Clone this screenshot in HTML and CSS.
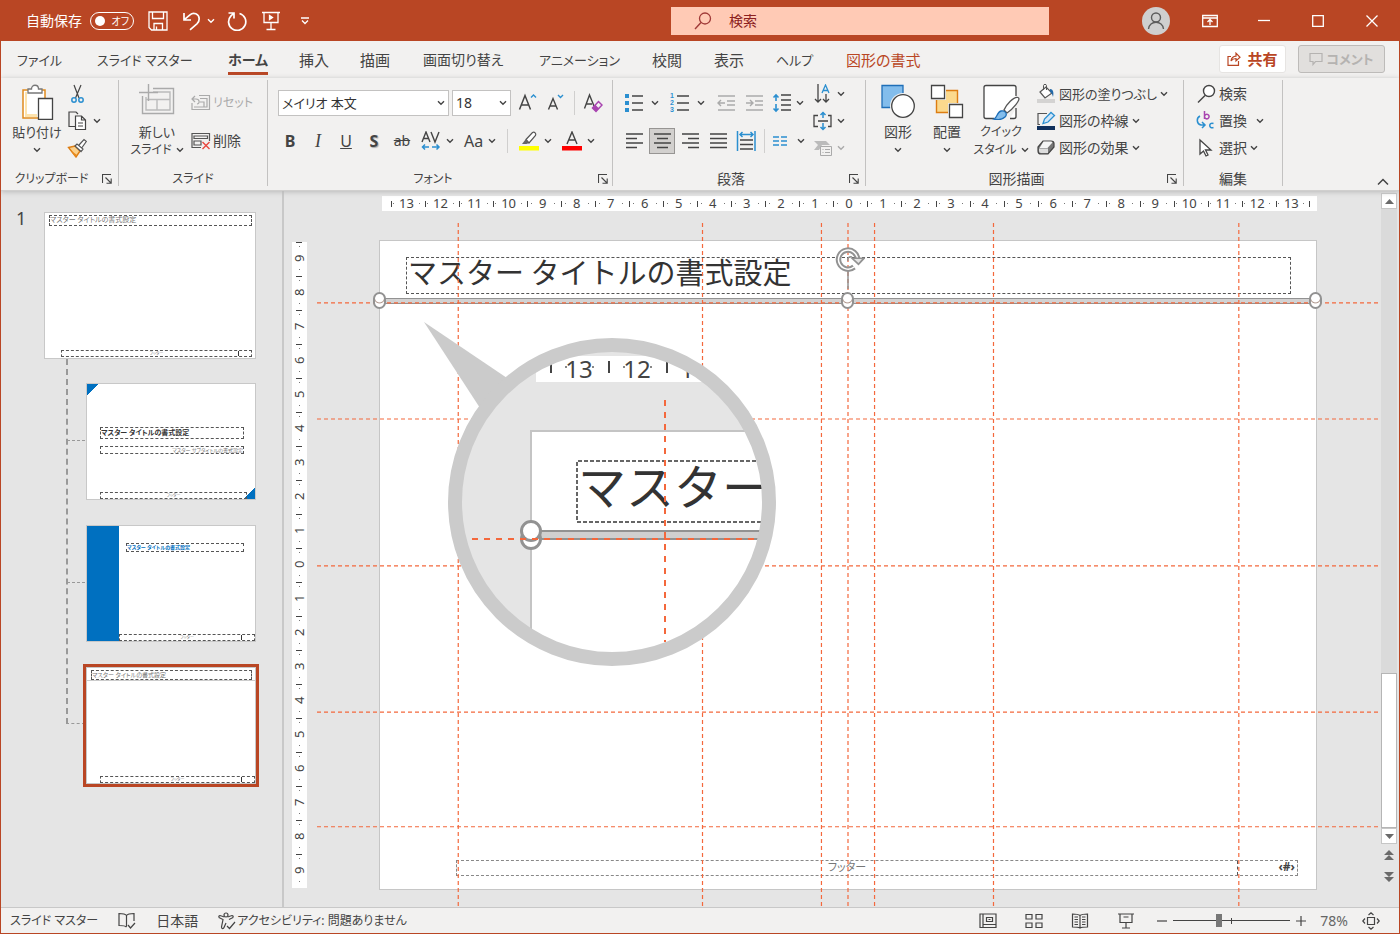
FILE: index.html
```html
<!DOCTYPE html>
<html lang="ja">
<head>
<meta charset="utf-8">
<title>スライド マスター</title>
<link rel="stylesheet" href="styles.css">
</head>
<body>
<svg class="defs" width="0" height="0" aria-hidden="true">
  <symbol id="chev" viewBox="0 0 8 6"><path d="M1 1.2 4 4.2 7 1.2" fill="none" stroke="currentColor" stroke-width="1.4"/></symbol>
  <symbol id="launch" viewBox="0 0 10 10"><path d="M.5 9V.5H9M3.5 3.5 9 9M9.200 4.500V9.200H4.500" fill="none" stroke="currentColor" stroke-width="1.100"/></symbol>
</svg>

<header class="titlebar">
  <div class="quick">
    <label class="autosave" for="autosave">自動保存</label>
    <span class="toggle"><input type="checkbox" id="autosave"><span class="toggle-text">オフ</span></span>
    <button aria-label="保存"><svg width="20" height="20" viewBox="0 0 20 20" class="line"><path d="M1 1h18v18H3.500L1 16.500zM4.500 1v6.500h11V1M6 19v-6.500h8.500V19M8.500 19v-3.500"/></svg></button>
    <button class="undo" aria-label="元に戻す"><svg width="20" height="20" viewBox="0 0 20 20" class="line thick"><path d="M2 2v7h7M2.300 8.700 8 3.800c3.500-3 9-1 9.200 4 .1 2.400-1 3.800-2.300 5L8 18.800"/></svg><svg width="8" height="6"><use href="#chev"/></svg></button>
    <button aria-label="繰り返し"><svg width="20" height="20" viewBox="0 0 20 20" class="line thick"><path d="M1.500 2H7v5.500M12.500 2.500A8.600 8.600 0 1 1 4 4.800L7 2"/></svg></button>
    <button class="present" aria-label="スライド ショー"><svg width="20" height="20" viewBox="0 0 20 20" class="line"><path d="M1 1.500h18M3 1.500v10h14v-10M10 11.500V18M5.500 18.500h9"/><path d="M8.500 4.500v4l3-2z" fill="#fff"/></svg></button>
    <button class="more" aria-label="カスタマイズ"><svg width="10" height="8" viewBox="0 0 10 8" class="line"><path d="M1 1h8M2 3.500l3 3 3-3"/></svg></button>
  </div>
  <label class="search">
    <svg width="20" height="20" viewBox="0 0 20 20"><circle cx="12" cy="7.500" r="5.500" fill="none" stroke="#a03a38" stroke-width="1.300"/><path d="M8 11.500 2 18" stroke="#a03a38" stroke-width="1.400"/></svg>
    <input type="text" placeholder="検索" aria-label="検索">
  </label>
  <div class="window">
    <button class="avatar" aria-label="アカウント"><svg width="28" height="28" viewBox="0 0 28 28"><circle cx="14" cy="14" r="14" fill="#cfcfcf"/><g fill="none" stroke="#5c5c5c" stroke-width="1.400"><circle cx="14" cy="10.500" r="4.500"/><path d="M6.500 22c.5-9 14.500-9 15 0"/></g></svg></button>
    <button aria-label="リボンの表示オプション"><svg width="16" height="14" viewBox="0 0 16 14" class="line"><path d="M.7 1.500h14.600v11H.7zM.7 4h14.600M8 11V6M5.500 8 8 5.500 10.500 8"/></svg></button>
    <button aria-label="最小化"><svg width="12" height="12" viewBox="0 0 12 12" class="line"><path d="M0 5.500h12"/></svg></button>
    <button aria-label="最大化"><svg width="12" height="12" viewBox="0 0 12 12" class="line"><path d="M.7.7h10.600v10.600H.7z"/></svg></button>
    <button aria-label="閉じる"><svg width="12" height="12" viewBox="0 0 12 12" class="line"><path d="m.5.500 11 11m0-11-11 11"/></svg></button>
  </div>
</header>

<nav class="tabs">
  <div class="tablist" role="tablist">
    <button role="tab" class="kana">ファイル</button>
    <button role="tab" class="kana">スライド マスター</button>
    <button role="tab" class="active" aria-selected="true">ホーム</button>
    <button role="tab">挿入</button>
    <button role="tab">描画</button>
    <button role="tab" class="mixed">画面切り替え</button>
    <button role="tab" class="kana">アニメーション</button>
    <button role="tab">校閲</button>
    <button role="tab">表示</button>
    <button role="tab" class="kana">ヘルプ</button>
    <button role="tab" class="context">図形の書式</button>
  </div>
  <div class="tab-actions">
    <button class="share"><svg width="14" height="14" viewBox="0 0 14 14" fill="none" stroke="#b94624" stroke-width="1.200"><path d="M4 4.500H1v8.800h10.500V9"/><path d="M4 9c.5-3.500 2.500-4.800 5-4.900V1.200L13 5.300 9 9V6.500C7 6.500 5.500 7 4 9z"/></svg>共有</button>
    <button class="comment" disabled><svg width="14" height="14" viewBox="0 0 14 14" fill="none" stroke="#b5b3b1" stroke-width="1.200"><path d="M1 1.500h12V9.500H6.500L4 12.500v-3H1z"/></svg>コメント</button>
  </div>
</nav>

<section class="ribbon">
  <div class="group clipboard">
    <div class="body">
      <button class="big"><svg width="34" height="36" viewBox="0 0 34 36"><path d="M3 6h22v28H3z" fill="#fff" stroke="#e08a1e" stroke-width="1.500"/><path d="M5 8h2v24H5zM5 30h12v3H5z" fill="#fde3ad"/><path d="M8 9V5h3.500c0-5 7-5 7 0H22v4z" fill="#fff" stroke="#777" stroke-width="1.300"/><path d="M18.500 14.500h14v21h-14z" fill="#fff" stroke="#444" stroke-width="1.300"/></svg><span class="mixed">貼り付け</span><svg width="8" height="6"><use href="#chev"/></svg></button>
      <div class="stack">
        <button class="row" aria-label="切り取り"><svg width="20" height="20" viewBox="0 0 20 20" fill="none"><path d="m7 1 5 13M14 1 8.500 14" stroke="#444" stroke-width="1.200"/><circle cx="7" cy="16" r="2.200" stroke="#2b8fd0" stroke-width="1.500"/><circle cx="14" cy="16" r="2.200" stroke="#2b8fd0" stroke-width="1.500"/></svg></button>
        <button class="row wide" aria-label="コピー"><svg width="20" height="20" viewBox="0 0 20 20" fill="none" stroke="#444" stroke-width="1.200"><path d="M8.500 15.500H2V1h7l2 2"/><path d="M8.500 5h6l4 4v9.500h-10zM14.500 5v4h4M11 12h5M11 15h5" fill="#fff"/></svg><svg width="8" height="6"><use href="#chev"/></svg></button>
        <button class="row" aria-label="書式のコピー"><svg width="20" height="20" viewBox="0 0 20 20"><path d="M1.500 9.500 8 8l5 5-4 6z" fill="#fbd08a" stroke="#dd7d12" stroke-width="1.400"/><path d="m3 12 7 5-1.500 2z" fill="#e88a1c"/><path d="m8 8 2-2 6 5-2 2.500zM12 7l5-5.500 2.300 2L15 9.500" fill="#fff" stroke="#555" stroke-width="1.200"/></svg></button>
      </div>
    </div>
    <div class="caption kana"><span>クリップボード</span><button aria-label="クリップボードの詳細"><svg width="10" height="10"><use href="#launch"/></svg></button></div>
  </div>

  <div class="group slides">
    <div class="body">
      <button class="big"><svg width="36" height="36" viewBox="0 0 36 36" fill="none" stroke="#aaa" stroke-width="1.400"><path d="M14 4.500h20.500v25h-31V12"/><path d="M7 13v13h24V8H14M7 15.500h24M18 15.500V26M14 8h17" stroke="#bbb"/><path d="M9.500 0v17M0 8.500h19" /></svg><span class="mixed">新しい</span><span class="with-chev kana">スライド<svg width="8" height="6"><use href="#chev"/></svg></span></button>
      <div class="rows">
        <button class="row" disabled><svg width="20" height="18" viewBox="0 0 20 18" fill="none" stroke="#aaa" stroke-width="1.200"><path d="M8 1.500h10.500v14H1V9M3 13h13V4.500H9M9 8h4v5"/><path d="M1 5h4c4 0 4 5 1 5M4 2 1 5l3 3"/></svg><span class="kana">リセット</span></button>
        <button class="row"><svg width="20" height="18" viewBox="0 0 20 18" fill="none" stroke="#555" stroke-width="1.200"><path d="M10 15.500H1v-14h17.500V9M3 4h13.500v2.500H3zM3 9v4h7V9z"/><path d="m11.500 10 7 7m0-7-7 7" stroke="#e8473f" stroke-width="1.400"/></svg><span>削除</span></button>
      </div>
    </div>
    <div class="caption kana"><span>スライド</span></div>
  </div>

  <div class="group font">
    <div class="body">
      <div class="rows">
        <div class="tools inset">
          <span class="combo face"><select aria-label="フォント"><option>メイリオ 本文</option></select><svg width="8" height="6"><use href="#chev"/></svg></span>
          <span class="combo size"><select aria-label="フォント サイズ"><option>18</option></select><svg width="8" height="6"><use href="#chev"/></svg></span>
          <button class="tool" aria-label="フォント サイズの拡大"><svg width="20" height="20" viewBox="0 0 20 20" fill="none"><path d="M1.500 16.500 7 2.500l5.500 14M3.500 12h7" stroke="#444" stroke-width="1.500"/><path d="m13 4.500 2.500-2.500L18 4.500" stroke="#2b8fd0" stroke-width="1.400"/></svg></button>
          <button class="tool" aria-label="フォント サイズの縮小"><svg width="20" height="20" viewBox="0 0 20 20" fill="none"><path d="M2.500 16.500 7 5.500l4.500 11M4 13h6" stroke="#444" stroke-width="1.400"/><path d="m12 2 2.500 2.500L17 2" stroke="#2b8fd0" stroke-width="1.400"/></svg></button>
          <span class="sep near"></span>
          <button class="tool" aria-label="書式のクリア"><svg width="20" height="20" viewBox="0 0 20 20" fill="none"><path d="M1.500 15.500 6.500 2l4.500 11M3.300 11H9" stroke="#444" stroke-width="1.400"/><path d="m9.500 15 6-6.500 3.500 3.500-6 6.500zM12 12.500l3.500 3.500" stroke="#a844b0" stroke-width="1.500" fill="#f2f1f0"/><path d="m9.500 15 2.500-2.500 3.500 3.500-2.500 2.500z" fill="#a844b0"/></svg></button>
        </div>
        <div class="tools">
          <button class="tool glyph"><b>B</b></button>
          <button class="tool glyph"><i>I</i></button>
          <button class="tool glyph"><u>U</u></button>
          <button class="tool glyph shadow"><b>S</b></button>
          <button class="tool glyph small"><s>ab</s></button>
          <button class="split" aria-label="文字の間隔"><svg width="20" height="20" viewBox="0 0 20 20" fill="none"><path d="m1 11 4-10 4 10M2.500 7.500h5M10 1l4 10 4-10" stroke="#444" stroke-width="1.400"/><path d="M1 16h7M11 16h7M4 13.500 1.500 16 4 18.500M15.500 13.500 18 16l-2.500 2.500" stroke="#2b8fd0" stroke-width="1.500"/></svg><svg width="8" height="6"><use href="#chev"/></svg></button>
          <button class="split glyph"><span>Aa</span><svg width="8" height="6"><use href="#chev"/></svg></button>
          <span class="sep"></span>
          <button class="split" aria-label="蛍光ペン"><svg width="20" height="20" viewBox="0 0 20 20"><path d="M7 8.500 13.500 1.500c2-1 4 1 3 3L10 12z" fill="#fff" stroke="#555" stroke-width="1.200"/><path d="M6.500 8.500 10 12l-2.500 1H3z" fill="#666"/><path d="M0 15h20v4.500H0z" fill="#ff0"/></svg><svg width="8" height="6"><use href="#chev"/></svg></button>
          <button class="split" aria-label="フォントの色"><svg width="20" height="20" viewBox="0 0 20 20"><path d="M5 13 10 1l5 12M6.800 9h6.400" fill="none" stroke="#444" stroke-width="1.400"/><path d="M0 15h20v4.500H0z" fill="#f00"/></svg><svg width="8" height="6"><use href="#chev"/></svg></button>
        </div>
      </div>
    </div>
    <div class="caption kana"><span>フォント</span><button aria-label="フォントの詳細"><svg width="10" height="10"><use href="#launch"/></svg></button></div>
  </div>

  <div class="group para">
    <div class="body">
      <div class="rows">
        <div class="tools">
          <button class="split" aria-label="箇条書き"><svg width="20" height="20" viewBox="0 0 20 20"><path d="M1 1h4v4H1zM1 8h4v4H1zM1 15h4v4H1z" fill="#2b8fd0"/><path d="M8 3h11M8 10h11M8 17h11" stroke="#444" stroke-width="1.400"/></svg><svg width="8" height="6"><use href="#chev"/></svg></button>
          <button class="split" aria-label="段落番号"><svg width="20" height="22" viewBox="0 -1 20 22"><g class="digits"><text x="0" y="5">1</text><text x="0" y="12">2</text><text x="0" y="19">3</text></g><path d="M7 3h12M7 10h12M7 17h12" stroke="#444" stroke-width="1.400"/></svg><svg width="8" height="6"><use href="#chev"/></svg></button>
          <button class="tool" aria-label="インデントを減らす" disabled><svg width="20" height="20" viewBox="0 0 20 20" fill="none" stroke="#aaa" stroke-width="1.400"><path d="M2 3h17M11 8h8M11 12h8M2 17h17M2 10h7M5 7 2 10l3 3"/></svg></button>
          <button class="tool" aria-label="インデントを増やす" disabled><svg width="20" height="20" viewBox="0 0 20 20" fill="none" stroke="#aaa" stroke-width="1.400"><path d="M2 3h17M11 8h8M11 12h8M2 17h17M2 10h7M6 7l3 3-3 3"/></svg></button>
          <button class="split" aria-label="行間"><svg width="20" height="20" viewBox="0 0 20 20" fill="none"><path d="M9 2h10M9 7h10M9 12h10M9 17h10" stroke="#444" stroke-width="1.400"/><path d="M4 2v6M4 11v7M1.500 4.500 4 2l2.500 2.500M1.500 15.500 4 18l2.500-2.500" stroke="#2b8fd0" stroke-width="1.600"/></svg><svg width="8" height="6"><use href="#chev"/></svg></button>
        </div>
        <div class="tools">
          <button class="tool" aria-label="左揃え"><svg width="20" height="20" class="bars" viewBox="0 0 20 20"><path d="M2 3h17M2 7.500h11M2 12h17M2 16.500h11"/></svg></button>
          <button class="tool on" aria-label="中央揃え" aria-pressed="true"><svg width="20" height="20" class="bars" viewBox="0 0 20 20"><path d="M2 3h17M5 7.500h11M2 12h17M5 16.500h11"/></svg></button>
          <button class="tool" aria-label="右揃え"><svg width="20" height="20" class="bars" viewBox="0 0 20 20"><path d="M2 3h17M8 7.500h11M2 12h17M8 16.500h11"/></svg></button>
          <button class="tool" aria-label="両端揃え"><svg width="20" height="20" class="bars" viewBox="0 0 20 20"><path d="M2 3h17M2 7.500h17M2 12h17M2 16.500h17"/></svg></button>
          <button class="tool" aria-label="均等割り付け"><svg width="20" height="20" class="bars" viewBox="0 0 20 20"><path d="M4 9h13M4 13.500h13M4 18h13"/><path d="M1.500 0v20M19 0v20M4 3.500h13M6.500 1 4 3.500 6.500 6M14.500 1 17 3.500 14.500 6" class="blue"/></svg></button>
          <span class="sep"></span>
          <button class="split" aria-label="段の追加または削除"><svg width="20" height="20" viewBox="0 0 20 20"><path d="M0 6h6M0 10h6M0 14h6M8 6h6M8 10h6M8 14h6" stroke="#2b8fd0" stroke-width="1.400"/></svg><svg width="8" height="6"><use href="#chev"/></svg></button>
        </div>
      </div>
      <div class="stack">
        <button class="row" aria-label="文字列の方向"><svg width="20" height="20" viewBox="0 0 20 20" fill="none"><path d="M5 0v18M2 15l3 3 3-3M13 10v8M10 15l3 3 3-3" stroke="#444" stroke-width="1.300"/><path d="m9 9 3.500-8L16 9M10.300 6.500h4.400" stroke="#2b8fd0" stroke-width="1.300"/></svg><svg width="8" height="6"><use href="#chev"/></svg></button>
        <button class="row" aria-label="文字の配置"><svg width="20" height="20" viewBox="0 0 20 20" fill="none"><path d="M5 4.500H1v11h4M15 4.500h3v11h-3M5 10h10" stroke="#444" stroke-width="1.300"/><path d="M10 1v6M10 12v7M7.500 4 10 1.500 12.500 4M7.500 16l2.500 2.500 2.500-2.500" stroke="#2b8fd0" stroke-width="1.500"/></svg><svg width="8" height="6"><use href="#chev"/></svg></button>
        <button class="row" aria-label="SmartArt に変換" disabled><svg width="20" height="20" viewBox="0 0 20 20"><path d="M1 3h12l4 4H9l-3 5H1l4-5z" fill="#bbb"/><path d="M7.500 8.500h11v9h-11z" fill="#f2f1f0" stroke="#aaa"/><path d="M9.500 11.500h1M12 11.500h5M9.500 14.500h1M12 14.500h5" stroke="#aaa"/></svg><svg width="8" height="6"><use href="#chev"/></svg></button>
      </div>
    </div>
    <div class="caption"><span>段落</span><button aria-label="段落の詳細"><svg width="10" height="10"><use href="#launch"/></svg></button></div>
  </div>

  <div class="group drawing">
    <div class="body">
      <button class="big"><svg width="34" height="36" viewBox="0 0 34 36"><path d="M1 1.500h21v22H1z" fill="#83bdec" stroke="#1f6fb8" stroke-width="1.300"/><circle cx="22" cy="22" r="13" fill="#f2f1f0"/><circle cx="22" cy="22" r="11.300" fill="#fff" stroke="#444" stroke-width="1.300"/></svg><span>図形</span><svg width="8" height="6"><use href="#chev"/></svg></button>
      <button class="big"><svg width="34" height="36" viewBox="0 0 34 36"><path d="M6.500 6.500h21v22h-21z" fill="#fbd98d" stroke="#dd7d12" stroke-width="1.400"/><path d="M0 0h16v16H0zM18 19h16v16H18z" fill="#f2f1f0"/><path d="M1.500 1.500h13v13h-13zM19.500 20.500h13v13h-13z" fill="#fff" stroke="#444" stroke-width="1.300"/></svg><span>配置</span><svg width="8" height="6"><use href="#chev"/></svg></button>
      <button class="big quickstyle"><svg width="38" height="36" viewBox="0 0 38 36"><path d="M34 12V3.500q0-2-2-2H4q-2 0-2 2v29q0 2 2 2h8M28 34.500h4q2 0 2-2V24" fill="#fff" stroke="#444" stroke-width="1.300"/><path d="M22 26C24 21 32 12 36 13.500S30 26 25 29z" fill="#fff" stroke="#555" stroke-width="1.300"/><path d="M12 35c3-1 3-7 7-8s7 3 4 6-7 3-11 2z" fill="#83bdec" stroke="#1f6fb8" stroke-width="1.300"/></svg><span class="kana">クイック</span><span class="with-chev kana">スタイル<svg width="8" height="6"><use href="#chev"/></svg></span></button>
      <div class="stack">
        <button class="row"><svg width="20" height="20" viewBox="0 0 20 20"><path d="m4 8 6-5 6 6-7 5z" fill="#fff" stroke="#555" stroke-width="1.200"/><path d="M7.500 6V1.500c0-1.500 3-1.500 3 0V6" fill="none" stroke="#555"/><path d="M14 5c3 0 4 3 3 8-1-3-1-4-3-5z" fill="#2268a8"/><path d="M1 15h18v4H1z" fill="#d4d3d2"/></svg><span class="mixed">図形の塗りつぶし</span><svg width="8" height="6"><use href="#chev"/></svg></button>
        <button class="row"><svg width="20" height="20" viewBox="0 0 20 20"><path d="M11 2.500H2v11h2" fill="none" stroke="#555" stroke-width="1.200"/><path d="M7 12.500 8.500 8l6.500-6.500 3.500 3L12 11z" fill="#cfe5f8" stroke="#2b8fd0" stroke-width="1.300"/><path d="M1 15h18v4H1z" fill="#10305c"/></svg><span>図形の枠線</span><svg width="8" height="6"><use href="#chev"/></svg></button>
        <button class="row"><svg width="20" height="20" viewBox="0 0 20 20"><path d="M7 3h8q3 0 3 2.500V9l-6 7H5q-3 0-3-3V9z" fill="#777" stroke="#444" stroke-width="1.200"/><path d="M7.500 3.500H15q2 0 1 1.500l-4.500 5H3.500z" fill="#f5f5f5"/><path d="M3 10.500h9V15H5q-2 0-2-2z" fill="#ddd"/></svg><span>図形の効果</span><svg width="8" height="6"><use href="#chev"/></svg></button>
      </div>
    </div>
    <div class="caption"><span>図形描画</span><button aria-label="図形描画の詳細"><svg width="10" height="10"><use href="#launch"/></svg></button></div>
  </div>

  <div class="group edit">
    <div class="body">
      <div class="stack">
        <button class="row"><svg width="20" height="20" viewBox="0 0 20 20" fill="none" stroke="#444" stroke-width="1.400"><circle cx="13" cy="7" r="5.500" fill="#fff"/><path d="M9 11.500 2 18.500"/></svg><span>検索</span></button>
        <button class="row replace"><svg width="20" height="20" viewBox="0 0 20 20" fill="none" stroke-width="1.500"><path d="M8.500 0v8M8.500 5.500a2.300 2.300 0 1 1 0 .1" stroke="#a844b0"/><path d="M4 5c-4 2-3.500 8 1 9h3M6 11l3 3-3 3M17.500 12.500c-5-2-5 6 0 4" stroke="#2b8fd0"/></svg><span>置換</span><svg width="8" height="6"><use href="#chev"/></svg></button>
        <button class="row"><svg width="20" height="20" viewBox="0 0 20 20"><path d="M4 2v14l3.500-3 2.500 5 2-1-2.500-5H15z" fill="#fff" stroke="#444" stroke-width="1.300"/></svg><span>選択</span><svg width="8" height="6"><use href="#chev"/></svg></button>
      </div>
    </div>
    <div class="caption"><span>編集</span></div>
  </div>
  <button class="collapse" aria-label="リボンを折りたたむ"><svg width="12" height="8" viewBox="0 0 12 8" fill="none" stroke="#444" stroke-width="1.500"><path d="m1 6.500 5-5 5 5"/></svg></button>
</section>

<main class="workspace">
  <aside class="panel">
    <span class="number">1</span>
    <div class="thumbs">
      <div class="thumb master"><p class="ph t-title">マスター タイトルの書式設定</p><p class="ph t-foot">フッター<span></span></p></div>
      <div class="layouts">
        <div class="thumb cover"><p class="ph c-title">マスター タイトルの書式設定</p><p class="ph c-sub">マスター サブタイトルの書式設定</p><p class="ph t-foot">フッター</p></div>
        <div class="thumb section"><p class="ph s-title">マスター タイトルの書式設定</p><p class="ph t-foot">フッター<span></span></p></div>
        <div class="thumb selected"><p class="ph t-title">マスター タイトルの書式設定</p><p class="ph t-foot">フッター<span></span></p></div>
      </div>
    </div>
  </aside>

  <section class="stage">
    <div class="ruler across">
      <span>13</span><span>12</span><span>11</span><span>10</span><span>9</span><span>8</span><span>7</span><span>6</span><span>5</span><span>4</span><span>3</span><span>2</span><span>1</span><span>0</span><span>1</span><span>2</span><span>3</span><span>4</span><span>5</span><span>6</span><span>7</span><span>8</span><span>9</span><span>10</span><span>11</span><span>12</span><span>13</span>
    </div>
    <div class="ruler down">
      <span>9</span><span>8</span><span>7</span><span>6</span><span>5</span><span>4</span><span>3</span><span>2</span><span>1</span><span>0</span><span>1</span><span>2</span><span>3</span><span>4</span><span>5</span><span>6</span><span>7</span><span>8</span><span>9</span>
    </div>
    <div class="slide">
      <h1 class="title">マスター タイトルの書式設定</h1>
      <div class="rule"></div>
      <div class="footer"><span class="footer-text">フッター</span><span class="footer-num">‹#›</span></div>

      <div class="guides">
        <svg width="100%" height="100%">
          <g>
            <line x1="13.300%" x2="13.300%" y2="100%"/><line x1="36.300%" x2="36.300%" y2="100%"/><line x1="47.500%" x2="47.500%" y2="100%"/><line x1="50%" x2="50%" y2="100%"/><line x1="52.500%" x2="52.500%" y2="100%"/><line x1="63.700%" x2="63.700%" y2="100%"/><line x1="86.800%" x2="86.800%" y2="100%"/>
            <line y1="11.700%" y2="11.700%" x2="100%"/><line y1="28.700%" y2="28.700%" x2="100%"/><line y1="50.200%" y2="50.200%" x2="100%"/><line y1="71.600%" y2="71.600%" x2="100%"/><line y1="88.400%" y2="88.400%" x2="100%"/>
          </g>
        </svg>
      </div>

      <i class="handle left"></i><i class="handle mid"></i><i class="handle right"></i>
      <svg class="rotate" width="32" height="52" viewBox="0 0 32 52" fill="none"><path d="M15 24v18" stroke="#929292" stroke-width="1.500"/><path d="M24.500 13A9.500 9.500 0 1 0 21 20" stroke="#929292" stroke-width="5.500"/><path d="M24.500 13A9.500 9.500 0 1 0 21 20" stroke="#fff" stroke-width="1.500"/><path d="M15 14a3 3 0 0 1 4-4" stroke="#929292" stroke-width="1.500"/><path d="M17 10.500h16l-7.500 8z" fill="#929292"/><path d="M21 12h8l-3.500 4z" fill="#e4e4e4"/></svg>

      <svg class="lens" width="356" height="348" viewBox="422 320 356 348">
        <clipPath id="lens-clip"><circle cx="612" cy="502" r="151"/></clipPath>
        <path d="M424 322 510 380 480 408z" fill="#cbcbcb"/>
        <circle cx="612" cy="502" r="157" fill="#e5e5e5"/>
        <g clip-path="url(#lens-clip)">
          <path d="M536 356h240v26H536z" fill="#fff"/>
          <path d="M551 361v12M609 361v12M667 361v12" stroke="#444" stroke-width="2"/>
          <path d="M565 367h2M592 367h2M623 367h2M650 367h2M681 367h2" stroke="#888" stroke-width="2"/>
          <g class="lens-num"><text x="579" y="378">13</text><text x="637" y="378">12</text><text x="694" y="378">11</text></g>
          <path d="M531 431h250v250H531z" fill="#fff" stroke="#c4c4c4" stroke-width="2"/>
          <path d="M780 461H577v61h203" fill="none" stroke="#666" stroke-width="2" stroke-dasharray="4 2"/>
          <text class="lens-title" x="578" y="505">マスター</text>
          <path d="M531 531h250v8H531z" fill="#d0d0d0" stroke="#929292" stroke-width="2"/>
          <circle cx="531" cy="539" r="9.500" fill="#fff" stroke="#929292" stroke-width="3"/>
          <circle cx="531" cy="531" r="9.500" fill="#fff" stroke="#929292" stroke-width="3"/>
          <path d="M665 400v242M472 539h300" stroke="#f4683c" stroke-width="2" stroke-dasharray="6 6"/>
        </g>
        <circle cx="612" cy="502" r="157" fill="none" stroke="#cbcbcb" stroke-width="14"/>
      </svg>
    </div>
  </section>

  <div class="scroll">
    <button aria-label="上へ"><svg width="9" height="5"><path d="M0 5 4.500 0 9 5z"/></svg></button>
    <div class="track"><div class="grip"></div></div>
    <button aria-label="下へ"><svg width="9" height="5"><path d="M0 0 4.500 5 9 0z"/></svg></button>
    <button class="page" aria-label="前のスライド"><svg width="10" height="10"><path d="M0 5 5 0l5 5zM0 10l5-5 5 5z"/></svg></button>
    <button class="page" aria-label="次のスライド"><svg width="10" height="10"><path d="M0 0 5 5l5-5zM0 5l5 5 5-5z"/></svg></button>
  </div>
</main>

<footer class="status">
  <div class="status-left">
    <span class="kana mode">スライド マスター</span>
    <button aria-label="スペル チェック"><svg width="18" height="18" viewBox="0 0 18 18" class="ink"><path d="M8.500 14.500V3.500C7 1.500 4 1.500 1 1.500v12c3 0 6 0 7.500 1.500M8.500 3.500C10 1.500 13 1.500 16 1.500V9M10 13l2.500 3L17 11"/></svg></button>
    <button>日本語</button>
    <button class="access kana"><svg width="18" height="18" viewBox="0 0 18 18" class="ink"><circle cx="8" cy="3" r="2"/><path d="M6.500 5 2 3.500C0 4 1 6 2 6l3 1.500L3.500 15c0 2 2 2 2.500.5L8 11M9.500 5 14 3.500c2 .5 1 2.500 0 2.500l-3 1.500M9 14l2.500 2.500L17 10"/></svg><span>アクセシビリティ: 問題ありません</span></button>
  </div>
  <div class="status-right">
    <button aria-label="標準"><svg width="18" height="16" viewBox="0 0 18 16" class="ink"><path d="M1 1h16v13.500H1zM4 1v13.500M4 11.500h13M7.500 4.500h6v4h-6zM9.500 6.500h2"/></svg></button>
    <button aria-label="スライド一覧"><svg width="18" height="16" viewBox="0 0 18 16" class="ink"><path d="M1 1.500h6v4.500H1zM11 1.500h6v4.500h-6zM1 10h6v4.500H1zM11 10h6v4.500h-6z"/></svg></button>
    <button aria-label="閲覧表示"><svg width="18" height="16" viewBox="0 0 18 16" class="ink"><path d="M9 15V2.500C7 1 4 1 1.500 1v13c2.500 0 5.500 0 7.500 1 2-1 5-1 7.500-1V1C14 1 11 1 9 2.500M3.500 4H7M3.500 6.500H7M3.500 9H7M3.500 11.500H7M11 4h3.500M11 6.500h3.500M11 9h3.500M11 11.500h3.500"/></svg></button>
    <button aria-label="スライド ショー"><svg width="18" height="16" viewBox="0 0 18 16" class="ink"><path d="M1 1h16M3 1v8.500h12V1M6.500 4h5M9 9.500V15M5 15h8"/></svg></button>
    <div class="zoom">
      <button aria-label="縮小"><svg width="10" height="10" class="ink"><path d="M0 5h10"/></svg></button>
      <input type="range" min="0" max="100" value="38" aria-label="ズーム">
      <button aria-label="拡大"><svg width="10" height="10" class="ink"><path d="M0 5h10M5 0v10"/></svg></button>
    </div>
    <button class="percent">78%</button>
    <button aria-label="ウィンドウに合わせる"><svg width="18" height="18" viewBox="0 0 18 18" class="ink"><path d="M5.500 5.500h7v7h-7zM6.500 3 9 .8 11.500 3M6.500 15 9 17.200l2.500-2.200M3 6.500.8 9 3 11.500M15 6.500 17.200 9 15 11.500"/></svg></button>
  </div>
</footer>
</body>
</html>
```
FILE: styles.css
```css
* { box-sizing: border-box; }

body {
  margin: 0;
  min-height: 100vh;
  display: flex;
  flex-direction: column;
  border: 1px solid #b94624;
  border-top: 0;
  background: #e5e5e5;
  color: #444;
  font: 14px/18px "Noto Sans", "Noto Sans CJK JP", sans-serif;
  font-feature-settings: "palt";
}

button, input, select { font: inherit; font-feature-settings: inherit; color: inherit; }
button { margin: 0; padding: 0; border: 0; background: none; white-space: nowrap; }
button:disabled { color: #aaa; }
svg { display: block; flex: none; }
p, h1 { margin: 0; }
.defs { position: absolute; }
.line { fill: none; stroke: #fff; stroke-width: 1.3; }
.thick { stroke-width: 1.7; }
.ink { fill: none; stroke: #444; stroke-width: 1.2; }
.kana { font-size: 12px; }
.mixed { font-size: 13px; }

/* Title bar */
.titlebar {
  height: 41px;
  flex: none;
  display: grid;
  grid-template-columns: 67fr 378px 35fr;
  align-items: center;
  background: #b94624;
  color: #fff;
}
.quick { display: flex; align-items: center; padding-left: 25px; }
.toggle {
  display: flex; align-items: center; justify-content: space-between;
  width: 44px; height: 18px; margin: 0 14px 0 8px; padding: 0 4px;
  border: 1px solid #fff; border-radius: 9px;
}
.toggle input { appearance: none; width: 10px; height: 10px; margin: 0; border-radius: 50%; background: #fff; }
.toggle-text { font-size: 10px; }
.undo { display: flex; align-items: center; gap: 5px; margin: 0 12px 0 14px; }
.present { margin-left: 14px; }
.more { margin-left: 19px; }
.search { display: flex; align-items: center; height: 28px; padding-left: 22px; gap: 16px; background: #ffcab5; }
.search input { flex: 1; min-width: 0; padding: 0; border: 0; background: none; outline: 0; }
.search input::placeholder { color: #8b2020; opacity: 1; }
.window { display: flex; align-items: center; justify-content: flex-end; }
.window button { width: 54px; display: grid; place-items: center; }

/* Tabs */
.tabs { height: 37px; flex: none; display: flex; justify-content: space-between; background: #f2f1f0; }
.tablist {
  display: grid;
  grid-template-columns: 80px 131px 71px 61px 63px 116px 113px 62px 62px 70px auto;
  padding-left: 16px;
  align-items: center;
  justify-items: start;
}
.tablist button { height: 30px; font-size: 15px; }
.tablist .kana { font-size: 13px; }
.tablist .mixed { font-size: 14px; }
.tablist .active { font-size: 14px; font-weight: 700; border-bottom: 3px solid #b94624; border-top: 3px solid transparent; }
.tablist .context { color: #b94624; }
.tab-actions { display: flex; gap: 12px; padding: 4px 14px 0 0; }
.tab-actions button { display: flex; align-items: center; justify-content: center; gap: 6px; height: 28px; border-radius: 3px; }
.tab-actions .share { width: 67px; background: #fff; color: #b94624; font-weight: 700; font-size: 15px; border: 1px solid #e6e4e2; }
.tab-actions .comment { width: 87px; gap: 3px; background: #e1dfdd; border: 1px solid #bdbbb9; color: #b5b3b1; font-weight: 700; font-size: 13px; }

/* Ribbon */
.ribbon {
  position: relative;
  z-index: 1;
  height: 113px;
  flex: none;
  display: flex;
  padding: 2px 0 4px;
  background: #f2f1f0;
  border-bottom: 1px solid #d0cfce;
  box-shadow: 0 1px 5px #b8b8b8;
}
.group { display: flex; flex-direction: column; border-right: 1px solid #c3c2c1; }
.clipboard { width: 118px; }
.slides { width: 149px; }
.font { width: 345px; }
.para { width: 253px; }
.drawing { width: 318px; }
.edit { width: 99px; }
.body { flex: 1; display: flex; align-items: flex-start; }
.clipboard .body { padding-left: 12px; gap: 6px; }
.slides .body { padding-left: 8px; gap: 4px; }
.font .body { padding-left: 8px; }
.para .body { padding-left: 7px; gap: 4px; }
.drawing .body { padding-left: 8px; gap: 1px; }
.edit .body { padding-left: 12px; }

.caption { display: grid; grid-template-columns: 1fr 14px; height: 14px; align-items: center; }
.caption span { text-align: center; line-height: 14px; }
.slides .caption, .edit .caption { grid-template-columns: 1fr; }
.drawing .caption, .para .caption { padding-right: 2px; }
.clipboard .caption { padding-right: 2px; }

.big { width: 48px; padding-top: 4px; display: flex; flex-direction: column; align-items: center; }
.big > span { line-height: 18px; }
.big > svg:first-child { margin-bottom: 3px; }
.big > svg:last-child { margin-top: 6px; }
.slides .big { width: 60px; }
.big.quickstyle { width: 58px; margin-right: 5px; }
.with-chev { display: flex; align-items: center; gap: 4px; }

.row { display: flex; align-items: center; gap: 4px; height: 27px; }
.row.wide { gap: 6px; }
.row.replace svg:last-child { margin-left: 6px; }
.edit .row, .drawing .row { gap: 3px; }
.rows { padding-top: 4px; }
.rows > * { height: 38px; }
.rows .row { gap: 2px; }

.tools { display: flex; align-items: center; }
.inset { padding-left: 2px; }
.tool { width: 28px; height: 26px; display: grid; place-items: center; }
.tool.on { width: 26px; margin: 0 1px; background: #d2d0ce; border: 1px solid #979593; }
.split { height: 26px; padding: 0 5px; display: flex; align-items: center; gap: 5px; }
.para .split { padding: 0 4px; gap: 7px; margin-right: 3px; }
.para .split:last-child { gap: 4px; margin-right: 0; }
.para .sep { margin: 0 4px; }
.sep { width: 1px; height: 24px; margin: 0 6px; background: #d0cfce; }
.sep.near { margin: 0 4px; }
.glyph { font-size: 16px; }
.glyph.small { font-size: 14px; }
.glyph i { font-family: "Liberation Serif", serif; font-size: 18px; }
.shadow b { text-shadow: 1px 1px 1px #aaa; }
.digits { font: 700 7px "Liberation Sans", sans-serif; fill: #2b8fd0; }
.bars { fill: none; stroke: #444; stroke-width: 1.4; }
.bars .blue { stroke: #2b8fd0; stroke-width: 1.5; }

.combo { display: grid; align-items: center; height: 26px; background: #fff; border: 1px solid #c3c2c1; }
.combo > * { grid-area: 1 / 1; }
.combo svg { justify-self: end; margin-right: 3px; pointer-events: none; }
.combo select { appearance: none; width: 100%; height: 24px; padding: 0 3px; border: 0; background: none; outline: 0; color: #333; }
.face { width: 171px; margin-right: 3px; font-size: 13px; }
.size { width: 59px; margin-right: 3px; }
.collapse { margin: auto 10px 0 auto; }

/* Workspace */
.workspace { flex: 1; min-height: 0; display: flex; }
.panel { flex: none; width: 283px; display: flex; padding: 21px 0 0 15px; border-right: 2px solid #c8c8c8; }
.number { width: 28px; font-size: 18px; line-height: 12px; }
.thumb { position: relative; background: #fff; border: 1px solid #c8c8c8; }
.master { width: 212px; height: 147px; }
.layouts {
  position: relative;
  display: flex; flex-direction: column; gap: 25px;
  margin-left: 22px; padding: 24px 0 0 20px;
}
.layouts::before {
  content: ""; position: absolute; left: 0; top: 0; bottom: 60px;
  border-left: 2px dashed #999; border-bottom: 1px dashed #999; width: 17px;
}
.layouts .thumb { width: 170px; height: 117px; }
.layouts .thumb::before { content: ""; position: absolute; left: -20px; top: 56px; width: 18px; border-top: 1px dashed #999; }
.layouts .selected { outline: 3px solid #b94624; }
.layouts .selected::before { left: 0; top: 12px; width: 100%; border-top: 1px solid #ccc; }
.ph { position: absolute; border: 1px dashed #555; font-size: 6px; line-height: 8px; white-space: nowrap; color: #777; }
.t-title { left: 4px; right: 3px; top: 2px; height: 11px; font-size: 7px; }
.t-foot { left: 16px; right: 3px; bottom: 1px; height: 7px; text-align: center; font-size: 4px; line-height: 5px; }
.t-foot span { position: absolute; right: 12px; top: 0; height: 5px; border-left: 1px dashed #333; }
.layouts .t-foot { left: 13px; right: 0; bottom: 0; }
.layouts .t-title { height: 10px; font-size: 6px; }
.layouts .cover .t-foot { right: 8px; }
.cover { background: linear-gradient(135deg, #0070c0 8px, transparent 8px), linear-gradient(315deg, #0070c0 8px, transparent 8px), #fff; }
.layouts .c-title { left: 13px; right: 11px; top: 43px; height: 12px; font-size: 7px; line-height: 10px; font-weight: 700; color: #333; }
.c-sub { left: 13px; right: 11px; top: 62px; height: 8px; font-size: 5px; line-height: 6px; text-align: right; }
.section { background: linear-gradient(90deg, #0070c0 32px, #fff 32px); }
.layouts .section .t-foot { left: 32px; }
.s-title { left: 39px; right: 11px; top: 17px; height: 9px; font-size: 5px; line-height: 7px; font-weight: 700; color: #0070c0; }

.stage {
  flex: 1; min-width: 0;
  display: grid;
  grid-template: 15px 1fr / 15px 1fr;
  gap: 29px 72px;
  padding: 5px 63px 17px 8px;
}
.ruler { display: flex; background: #fff; font: 13px/15px "Noto Sans", sans-serif; }
.ruler span { flex: 1; display: flex; align-items: center; justify-content: space-around; }
.ruler span::before, .ruler span::after { content: ""; width: 1px; height: 1px; background: #777; }
.across { grid-column: 2; margin-left: 3px; padding: 0 7px 0 9px; }
.across span { padding-right: 3px; background: linear-gradient(#444, #444) 0 5px / 1px 6px no-repeat; }
.across span:last-child { background: linear-gradient(#444, #444) 0 5px / 1px 6px no-repeat, linear-gradient(#444, #444) 100% 5px / 1px 6px no-repeat; }
.down { margin: 2px 0; flex-direction: column; }
.down span { min-height: 0; writing-mode: vertical-rl; transform: rotate(180deg); padding-top: 2px; background: linear-gradient(#444, #444) 5px 100% / 6px 1px no-repeat; }

.slide { position: relative; background: #fff; border: 1px solid #c6c6c6; padding: 16px 25px 13px 26px; display: flex; flex-direction: column; }
.title { height: 37px; border: 1px dashed #555; padding-left: 1px; font: 400 29px/26px "Noto Sans CJK JP", sans-serif; font-feature-settings: normal; color: #333; white-space: nowrap; }
.rule { height: 6px; margin: 4px -25px 0 -26px; background: #d3d2d2; border: solid #929292; border-width: 1px 0; }
.footer { display: grid; grid-template-columns: 1fr 60px; height: 16px; margin: auto -7px 0 50px; font-size: 11px; line-height: 12px; border: 1px dashed #888; }
.footer-text { text-align: center; color: #777; }
.footer-num { text-align: right; font-size: 12px; font-weight: 700; padding-right: 2px; border-left: 1px dashed #555; }

/* Drawing guides reach past the slide on every side */
.guides { position: absolute; inset: -18px -63px -17px; }
.guides g { stroke: #f4683c; stroke-width: 1.2; stroke-dasharray: 4 3; }

.handle { position: absolute; top: 51px; width: 13px; height: 17px; margin-left: -7px; border: 2px solid #929292; border-radius: 7px; background: radial-gradient(circle at 50% 30%, #fff 4px, #b0998f 5px, #fff 6px); }
.handle.left { left: 0; } .handle.mid { left: 50%; } .handle.right { left: 100%; }
.rotate { position: absolute; left: 50%; top: 6px; margin-left: -15px; }
.lens { position: absolute; left: 42px; top: 79px; }
.lens-num { font: 24px "Noto Sans", sans-serif; fill: #444; text-anchor: middle; }
.lens-title { font: 48px "Noto Sans CJK JP", sans-serif; font-feature-settings: normal; fill: #333; }

.scroll { flex: none; width: 19px; display: flex; flex-direction: column; align-items: center; padding: 2px 1px 19px 0; }
.scroll svg { fill: #6a6a6a; }
.scroll button { width: 16px; height: 16px; display: grid; place-items: center; background: #fff; border: 1px solid #c6c6c6; }
.scroll .page { height: 22px; border: 0; background: none; }
.track { flex: 1; width: 16px; background: #dadada; display: flex; flex-direction: column; justify-content: flex-end; }
.grip { height: 25%; background: #fff; border: 1px solid #b5b5b5; }

/* Status bar */
.status { height: 26px; flex: none; display: flex; justify-content: space-between; align-items: center; background: #f2f1f0; border-top: 1px solid #c8c8c8; }
.status-left, .status-right, .zoom, .access { display: flex; align-items: center; }
.status-left { padding-left: 9px; gap: 20px; }
.access { gap: 1px; }
.status-right { padding-right: 19px; gap: 28px; }
.zoom { gap: 6px; margin: 0 -14px 0 -6px; }
.zoom input {
  appearance: none; width: 117px; height: 14px; margin: 0;
  background: linear-gradient(#444, #444) 50% 50% / 1px 6px no-repeat, linear-gradient(#444, #444) 0 50% / 100% 1px no-repeat;
}
.zoom input::-webkit-slider-thumb { appearance: none; width: 6px; height: 13px; background: #777; }
.percent { margin-right: -14px; color: #666; }
```
